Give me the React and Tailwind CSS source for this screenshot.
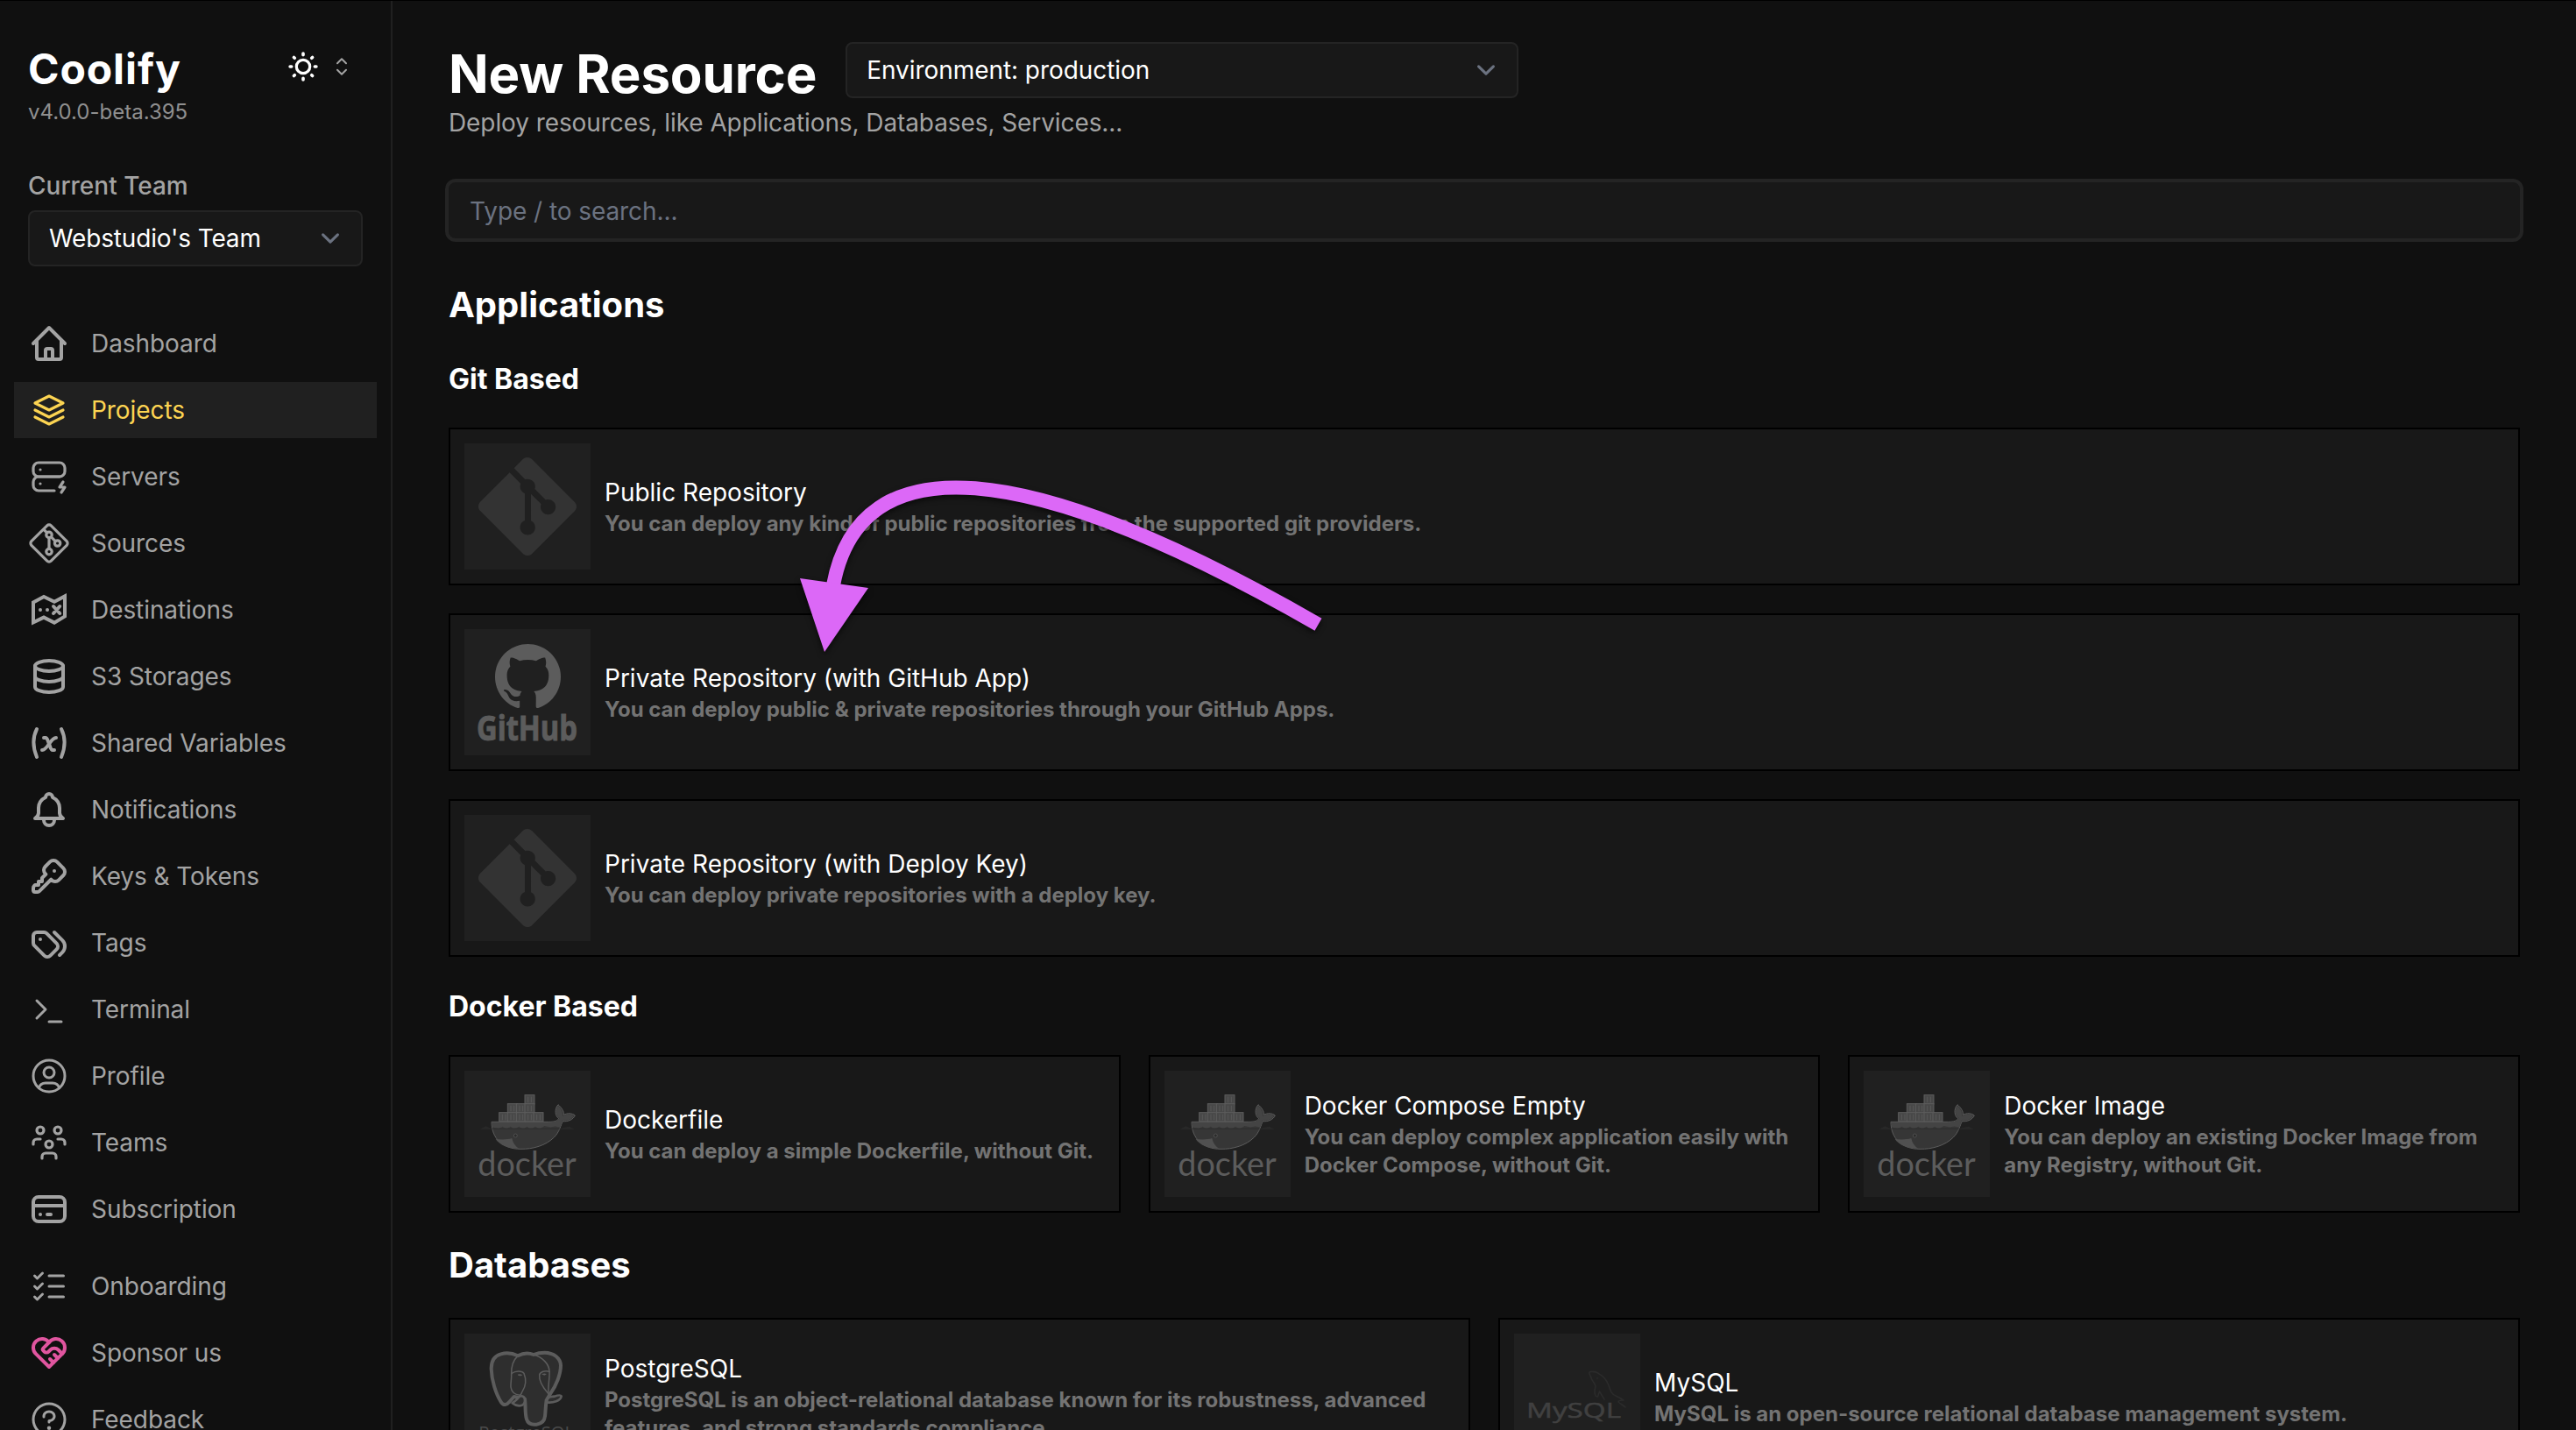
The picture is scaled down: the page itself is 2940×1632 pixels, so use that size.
import { PiListChecks, PiQuestion } from "react-icons/pi";
import { SiGit, SiGithub } from "react-icons/si";

function Icon({ d, width = 2, className = "" }) {
  return (
    <svg
      viewBox="0 0 24 24"
      className={`size-12 shrink-0 ${className}`}
      fill="none"
      stroke="currentColor"
      strokeWidth={width}
      strokeLinecap="round"
      strokeLinejoin="round"
    >
      {d.map((path) => (
        <path key={path} d={path} />
      ))}
    </svg>
  );
}

function SourcesIcon() {
  return (
    <svg viewBox="0 0 15 15" className="size-12 shrink-0" fill="none" stroke="currentColor">
      <path d="M6.793 1.207a1 1 0 0 1 1.414 0l5.586 5.586a1 1 0 0 1 0 1.414l-5.586 5.586a1 1 0 0 1-1.414 0L1.207 8.207a1 1 0 0 1 0-1.414z" />
      <path d="M5.5 2.5l1.3 1.3M7.5 5.500v4M8.2 5.2l1.6 1.6" />
      <circle cx="7.5" cy="4.5" r="1" />
      <circle cx="10.5" cy="7.5" r="1" />
      <circle cx="7.5" cy="10.5" r="1" />
    </svg>
  );
}

const navItems = [
  {
    label: "Dashboard",
    icon: (
      <Icon d={["M3 12l2-2m0 0l7-7 7 7M5 10v10a1 1 0 001 1h3m10-11l2 2m-2-2v10a1 1 0 01-1 1h-3m-6 0a1 1 0 001-1v-4a1 1 0 011-1h2a1 1 0 011 1v4a1 1 0 001 1m-6 0h6"]} />
    ),
  },
  {
    label: "Projects",
    active: true,
    icon: <Icon width={1.6} d={["M12 4L4 8l8 4l8-4z", "M4 12l8 4l8-4", "M4 16l8 4l8-4"]} />,
  },
  {
    label: "Servers",
    icon: (
      <Icon
        width={1.6}
        d={[
          "M3 7a3 3 0 0 1 3-3h12a3 3 0 0 1 3 3v2a3 3 0 0 1-3 3H6a3 3 0 0 1-3-3z",
          "M15 20H6a3 3 0 0 1-3-3v-2a3 3 0 0 1 3-3h12",
          "M7 8v.01M7 16v.01",
          "M20 15l-2 3h3l-2 3",
        ]}
      />
    ),
  },
  { label: "Sources", icon: <SourcesIcon /> },
  {
    label: "Destinations",
    icon: (
      <svg viewBox="0 0 24 24" className="size-12 shrink-0" fill="none" stroke="currentColor" strokeWidth="2" strokeLinecap="round">
        <path d="M9 4.500L3 7.700v11.500l6-2.900l6 3l6-3.600V4.200l-6 3.200z" />
        <path d="M7 12v.01M11 12v.01M14.500 10l3.600 4M18.100 10l-3.600 4" />
      </svg>
    ),
  },
  {
    label: "S3 Storages",
    icon: <Icon d={["M4 6a8 3 0 1 0 16 0A8 3 0 1 0 4 6", "M4 6v6a8 3 0 0 0 16 0V6", "M4 12v6a8 3 0 0 0 16 0v-6"]} />,
  },
  {
    label: "Shared Variables",
    icon: (
      <Icon
        d={[
          "M5 4C2.5 9 2.5 14 5 20M19 4c2.5 5 2.5 10 0 16",
          "M9 9h1c1 0 1 1 2.016 3.527C13 15 13 16 14 16h1",
          "M8 16c1.5 0 3-2 4-3.5S14.5 9 16 9",
        ]}
      />
    ),
  },
  {
    label: "Notifications",
    icon: (
      <Icon
        d={[
          "M10 5a2 2 0 0 1 4 0a7 7 0 0 1 4 6v3a4 4 0 0 0 2 3H4a4 4 0 0 0 2-3v-3a7 7 0 0 1 4-6",
          "M9 17v1a3 3 0 0 0 6 0v-1",
        ]}
      />
    ),
  },
  {
    label: "Keys & Tokens",
    icon: (
      <Icon
        d={[
          "M16.555 3.843l3.602 3.602a2.877 2.877 0 0 1 0 4.069l-2.643 2.643a2.877 2.877 0 0 1-4.069 0l-.301-.301l-6.558 6.558a2 2 0 0 1-1.239.578L5.172 21H4a1 1 0 0 1-.993-.883L3 20v-1.172a2 2 0 0 1 .467-1.284l.119-.13L4 17h2v-2h2v-2l2.144-2.144l-.301-.301a2.877 2.877 0 0 1 0-4.069l2.643-2.643a2.877 2.877 0 0 1 4.069 0z",
          "M15 9h.01",
        ]}
      />
    ),
  },
  {
    label: "Tags",
    icon: (
      <Icon
        d={[
          "M3 8v4.172a2 2 0 0 0 .586 1.414l5.71 5.71a2.41 2.41 0 0 0 3.408 0l3.592-3.592a2.41 2.41 0 0 0 0-3.408l-5.71-5.71A2 2 0 0 0 9.172 6H5a2 2 0 0 0-2 2",
          "M18 19l1.592-1.592a4.82 4.82 0 0 0 0-6.816L15 6m-8 4h-.01",
        ]}
      />
    ),
  },
  { label: "Terminal", icon: <Icon width={1.5} d={["M5 7l5 5l-5 5", "M12 19h7"]} /> },
  {
    label: "Profile",
    icon: (
      <Icon
        width={1.5}
        d={[
          "M3 12a9 9 0 1 0 18 0a9 9 0 1 0-18 0",
          "M9 10a3 3 0 1 0 6 0a3 3 0 1 0-6 0",
          "M6.168 18.849A4 4 0 0 1 10 16h4a4 4 0 0 1 3.834 2.855",
        ]}
      />
    ),
  },
  {
    label: "Teams",
    icon: (
      <Icon
        width={1.6}
        d={[
          "M10 13a2 2 0 1 0 4 0a2 2 0 0 0-4 0",
          "M8 21v-1a2 2 0 0 1 2-2h4a2 2 0 0 1 2 2v1",
          "M15 5a2 2 0 1 0 4 0a2 2 0 0 0-4 0",
          "M17 10h2a2 2 0 0 1 2 2v1",
          "M5 5a2 2 0 1 0 4 0a2 2 0 0 0-4 0",
          "M3 13v-1a2 2 0 0 1 2-2h2",
        ]}
      />
    ),
  },
  {
    label: "Subscription",
    icon: (
      <Icon d={["M3 8a3 3 0 0 1 3-3h12a3 3 0 0 1 3 3v8a3 3 0 0 1-3 3H6a3 3 0 0 1-3-3zm0 2h18M7 15h.01M11 15h2"]} />
    ),
  },
];

const footerItems = [
  { label: "Onboarding", icon: <PiListChecks className="size-12 shrink-0" /> },
  {
    label: "Sponsor us",
    icon: (
      <Icon
        className="text-[#e0559f]"
        d={[
          "M19.5 12.572L12 20l-7.5-7.428A5 5 0 1 1 12 6.006a5 5 0 1 1 7.5 6.572",
          "M12 6L8.707 9.293a1 1 0 0 0 0 1.414l.543.543c.69.69 1.81.69 2.5 0l1-1a3.182 3.182 0 0 1 4.5 0l2.25 2.25m-7 3l2 2M15 13l2 2",
        ]}
      />
    ),
  },
  { label: "Feedback", icon: <PiQuestion className="size-12 shrink-0" /> },
];

function NavItem({ label, icon, active }) {
  return (
    <li
      className={`flex h-16 items-center gap-6 pl-4 text-[28px] leading-10 tracking-[-0.07px] ${
        active ? "bg-[#202020] text-[#fcd452]" : "text-[#a3a3a3]"
      }`}
    >
      {icon}
      <span>{label}</span>
    </li>
  );
}

function Select({ children, className = "" }) {
  return (
    <div
      className={`flex h-16 items-center justify-between rounded-lg border-2 border-[#242424] bg-[#181818] pr-3.5 pl-[22px] text-[28px] leading-10 text-white ${className}`}
    >
      <span>{children}</span>
      <svg viewBox="0 0 20 20" className="size-[42px]" fill="none" stroke="#6b7280" strokeWidth="1.5" strokeLinecap="round" strokeLinejoin="round">
        <path d="M6 8l4 4 4-4" />
      </svg>
    </div>
  );
}

function ThemeSwitch() {
  return (
    <div className="mt-[11px] mr-[18px] flex items-center gap-5">
      <svg viewBox="-18 -18 36 36" className="size-9" fill="none" stroke="white" strokeLinecap="round">
        <circle r="7.7" strokeWidth="3.2" />
        <path
          strokeWidth="3.6"
          d="M0-14.9v1.6M0 14.9v-1.6M-14.9 0h1.6M14.9 0h-1.6M-10.6-10.6l.9.9M10.6-10.6l-.9.9M-10.6 10.6l.9-.9M10.6 10.6l-.9-.9"
        />
      </svg>
      <svg viewBox="0 0 12 20" className="h-5 w-3 overflow-visible" fill="none" stroke="#a3a3a3" strokeWidth="2" strokeLinecap="round" strokeLinejoin="round">
        <path d="M1 6.2l5-5 5 5M1 13.8l5 5 5-5" />
      </svg>
    </div>
  );
}

function GitLogo() {
  return (
    <div className="p-4">
      <SiGit className="size-28 text-[#333333]" />
    </div>
  );
}

function GithubLogo() {
  return (
    <div className="flex flex-col items-center pt-4 text-[#5c5c5c]">
      <SiGithub className="size-[75px]" />
      <svg viewBox="0 0 112 40" className="h-10 w-28 overflow-visible">
        <text x="-2" y="36" textLength="115" lengthAdjust="spacingAndGlyphs" fill="currentColor" stroke="currentColor" strokeWidth="1" className="font-['Open_Sans',sans-serif] text-[40px] font-bold">
          GitHub
        </text>
      </svg>
    </div>
  );
}

const containers = [
  [222, 98], [163, 128], [193, 128], [222, 128], [134, 158], [163, 158], [193, 158], [222, 158], [252, 158],
];

function DockerLogo() {
  return (
    <svg viewBox="15 15 432 432" className="size-36">
      {containers.map(([x, y]) => (
        <g key={`${x}-${y}`}>
          <rect x={x} y={y} width="33" height="31" fill="#484848" stroke="#5c5c5c" strokeWidth="3" />
          <path d={`M${x + 11} ${y + 6}v20M${x + 22} ${y + 6}v20`} stroke="#585858" strokeWidth="3" />
        </g>
      ))}
      <path
        d="M108 190H305C325 190 334 186 338 179C326 170 322 148 336 131C348 142 357 154 355 166C368 159 384 160 394 168C388 182 370 190 352 188C345 200 341 225 322 243C294 271 250 284 207 283C145 283 108 246 108 190Z"
        fill="#363636"
        stroke="#5c5c5c"
        strokeWidth="3"
      />
      <path d="M110 192H306C325 191 336 186 341 178C328 169 326 150 336 135C345 144 353 155 351 171C365 162 380 162 390 169C384 181 369 187 350 185L343 208H335C322 201 318 210 306 208S290 202 286 206C276 214 266 212 258 206C248 213 238 214 230 206C220 214 210 212 202 206C192 214 180 213 174 206C164 213 153 213 146 206C137 213 122 213 110 207Z" fill="#444444" />
      <path d="M122 249C142 251 162 251 178 246C181 262 189 273 201 281C163 281 137 270 122 249Z" fill="#505050" />
      <path d="M68 215L88 205L106 212H344L374 206L392 215Z" fill="#2b2b2b" opacity=".75" />
      <circle cx="190" cy="237" r="6" fill="#2b2b2b" stroke="#5c5c5c" strokeWidth="2" />
      <text x="61" y="375" textLength="337" lengthAdjust="spacingAndGlyphs" fill="#5c5c5c" className="font-['Lato',sans-serif] text-[114px]">
        docker
      </text>
    </svg>
  );
}

function PostgresLogo() {
  return (
    <svg viewBox="15 12 432 432" className="size-36" strokeLinecap="round" strokeLinejoin="round">
      <g fill="#2e2e2e" stroke="#5c5c5c">
        <path
          strokeWidth="12"
          d="M198 88C180 79 158 77 140 82C117 88 107 105 107 132C108 170 122 218 141 247C149 259 160 257 168 247L185 228L222 236C225 260 222 286 228 305C233 322 245 325 262 323C280 321 289 313 291 295C293 277 293 260 296 240L308 220C330 190 345 150 345 121C344 95 320 77 290 77C275 77 262 80 252 84C232 76 213 80 198 88Z"
        />
        <path strokeWidth="8" d="M179 250C196 264 222 263 222 240C222 225 208 222 200 231C195 238 190 242 179 250Z" />
        <path strokeWidth="8" d="M297 247C318 250 345 242 347 226C344 220 332 224 323 227C313 229 299 224 297 247Z" />
      </g>
      <g fill="none" stroke="#5c5c5c" strokeWidth="4.5">
        <path d="M198 88C182 103 175 128 176 152C177 166 173 180 174 195C176 212 188 221 205 223" />
        <path d="M252 84C282 92 305 116 306 141C308 160 301 185 303 218" />
        <path d="M177 148C190 139 212 138 219 148C226 166 226 190 214 209C209 216 212 220 205 223" />
        <path d="M306 142C292 138 275 142 272 153C270 174 283 196 303 218" />
      </g>
      <path d="M199 153q7-3 13 1q-5 5-13-1M282 151q7-3 13 0q-6 6-13 0" fill="#5c5c5c" stroke="#5c5c5c" strokeWidth="2" />
      <text x="64" y="373" textLength="326" lengthAdjust="spacingAndGlyphs" fill="#4a4a4a" className="font-['Open_Sans',sans-serif] text-[58px]">
        PostgreSQL
      </text>
    </svg>
  );
}

function MysqlLogo() {
  return (
    <svg viewBox="0 0 144 144" className="size-36">
      <g fill="none" stroke="#2b2b2b" strokeWidth="1.6" strokeLinejoin="round" strokeLinecap="round">
        <path d="M103 75L97.500 66L95.500 72C92 72 91 67 93 60C92 56 88 53 88 50C86 47 85 44 87 43.500C91 43 95 44 97 46C103 49 106 54 108 59C110 65 111 69 116 71C120 73 124 75 125 76C122 76 119 76 119 78C121 80 125 82 127 84" />
        <path d="M95 50.500v.5" />
      </g>
      <text x="14" y="96" textLength="108" lengthAdjust="spacingAndGlyphs" fill="#404040" stroke="#404040" strokeWidth=".5" className="font-['Open_Sans',sans-serif] text-[24px]">
        MySQL
      </text>
    </svg>
  );
}

function ResourceCard({ logo, title, children }) {
  return (
    <div className="flex h-[180px] items-center gap-4 border-2 border-black bg-[#181818] px-4">
      <div className="size-36 shrink-0 bg-[#202020]">{logo}</div>
      <div>
        <div className="text-[28px] leading-10 text-white">{title}</div>
        <div className="text-2xl leading-8 font-bold text-[#737373]">{children}</div>
      </div>
    </div>
  );
}

function Sidebar() {
  return (
    <aside className="w-[448px] shrink-0 border-r-2 border-[#202020] pt-[46px]">
      <div className="px-8">
        <div className="flex items-start justify-between">
          <div className="text-5xl leading-[64px] font-bold tracking-[0.9px] text-white">Coolify</div>
          <ThemeSwitch />
        </div>
        <div className="mt-px text-2xl leading-8 text-[#8f8f8f]">v4.0.0-beta.395</div>
        <div className="mt-12 text-[28px] leading-10 font-medium text-[#a3a3a3]">Current Team</div>
        <Select className="mt-2 tracking-[-0.15px]">Webstudio's Team</Select>
      </div>
      <ul className="mt-14 flex flex-col gap-3 px-4">
        {navItems.map((item) => (
          <NavItem key={item.label} {...item} />
        ))}
        <li />
        {footerItems.map((item) => (
          <NavItem key={item.label} {...item} />
        ))}
      </ul>
    </aside>
  );
}

function AnnotationArrow() {
  return (
    <svg
      viewBox="880 520 660 250"
      className="pointer-events-none absolute top-[519px] left-[880px] h-[250px] w-[660px] drop-shadow-[0_3px_3px_rgba(0,0,0,0.6)]"
    >
      <path d="M951 668C981 506 1169 520 1504.500 712.700" fill="none" stroke="#dc68f7" strokeWidth="16" />
      <path d="M913 660L991 671L941 744Z" fill="#dc68f7" />
    </svg>
  );
}

export default function App() {
  return (
    <div className="relative flex h-[1632px] w-[2940px] overflow-hidden border-t border-black bg-[#101010] font-['Inter',sans-serif] antialiased">
      <Sidebar />
      <main className="grow px-16 pt-[47px]">
        <div className="flex items-start gap-[33px]">
          <h1 className="text-6xl leading-[72px] font-bold tracking-[-0.15px] text-white">New Resource</h1>
          <Select className="w-3xl tracking-[-0.06px]">Environment: production</Select>
        </div>
        <div className="text-[28px] leading-10 tracking-[-0.09px] text-[#a3a3a3]">
          Deploy resources, like Applications, Databases, Services...
        </div>
        <div className="-mx-1 mt-11 flex h-[72px] items-center rounded-xl border-4 border-[#242424] bg-[#181818] px-6 pt-0.5 text-[28px] leading-10 tracking-[-0.07px] text-[#6b7280]">
          Type / to search...
        </div>

        <h2 className="mt-11 text-[40px] leading-[56px] font-bold text-white">Applications</h2>
        <h3 className="mt-[33px] text-[32px] leading-[48px] font-bold text-white">Git Based</h3>
        <div className="mt-[31px] grid gap-8">
          <ResourceCard logo={<GitLogo />} title="Public Repository">
            You can deploy any kind of public repositories from the supported git providers.
          </ResourceCard>
          <ResourceCard logo={<GithubLogo />} title="Private Repository (with GitHub App)">
            You can deploy public &amp; private repositories through your GitHub Apps.
          </ResourceCard>
          <ResourceCard logo={<GitLogo />} title="Private Repository (with Deploy Key)">
            You can deploy private repositories with a deploy key.
          </ResourceCard>
        </div>

        <h3 className="mt-[33px] text-[32px] leading-[48px] font-bold text-white">Docker Based</h3>
        <div className="mt-[31px] grid grid-cols-3 gap-8">
          <ResourceCard logo={<DockerLogo />} title="Dockerfile">
            You can deploy a simple Dockerfile, without Git.
          </ResourceCard>
          <ResourceCard logo={<DockerLogo />} title="Docker Compose Empty">
            You can deploy complex application easily with Docker Compose, without Git.
          </ResourceCard>
          <ResourceCard logo={<DockerLogo />} title="Docker Image">
            You can deploy an existing Docker Image from any Registry, without Git.
          </ResourceCard>
        </div>

        <h2 className="mt-8 text-[40px] leading-[56px] font-bold text-white">Databases</h2>
        <div className="mt-8 grid grid-cols-2 gap-8">
          <ResourceCard logo={<PostgresLogo />} title="PostgreSQL">
            PostgreSQL is an object-relational database known for its robustness, advanced features, and strong
            standards compliance.
          </ResourceCard>
          <ResourceCard logo={<MysqlLogo />} title="MySQL">
            MySQL is an open-source relational database management system.
          </ResourceCard>
        </div>
      </main>
      <AnnotationArrow />
    </div>
  );
}
